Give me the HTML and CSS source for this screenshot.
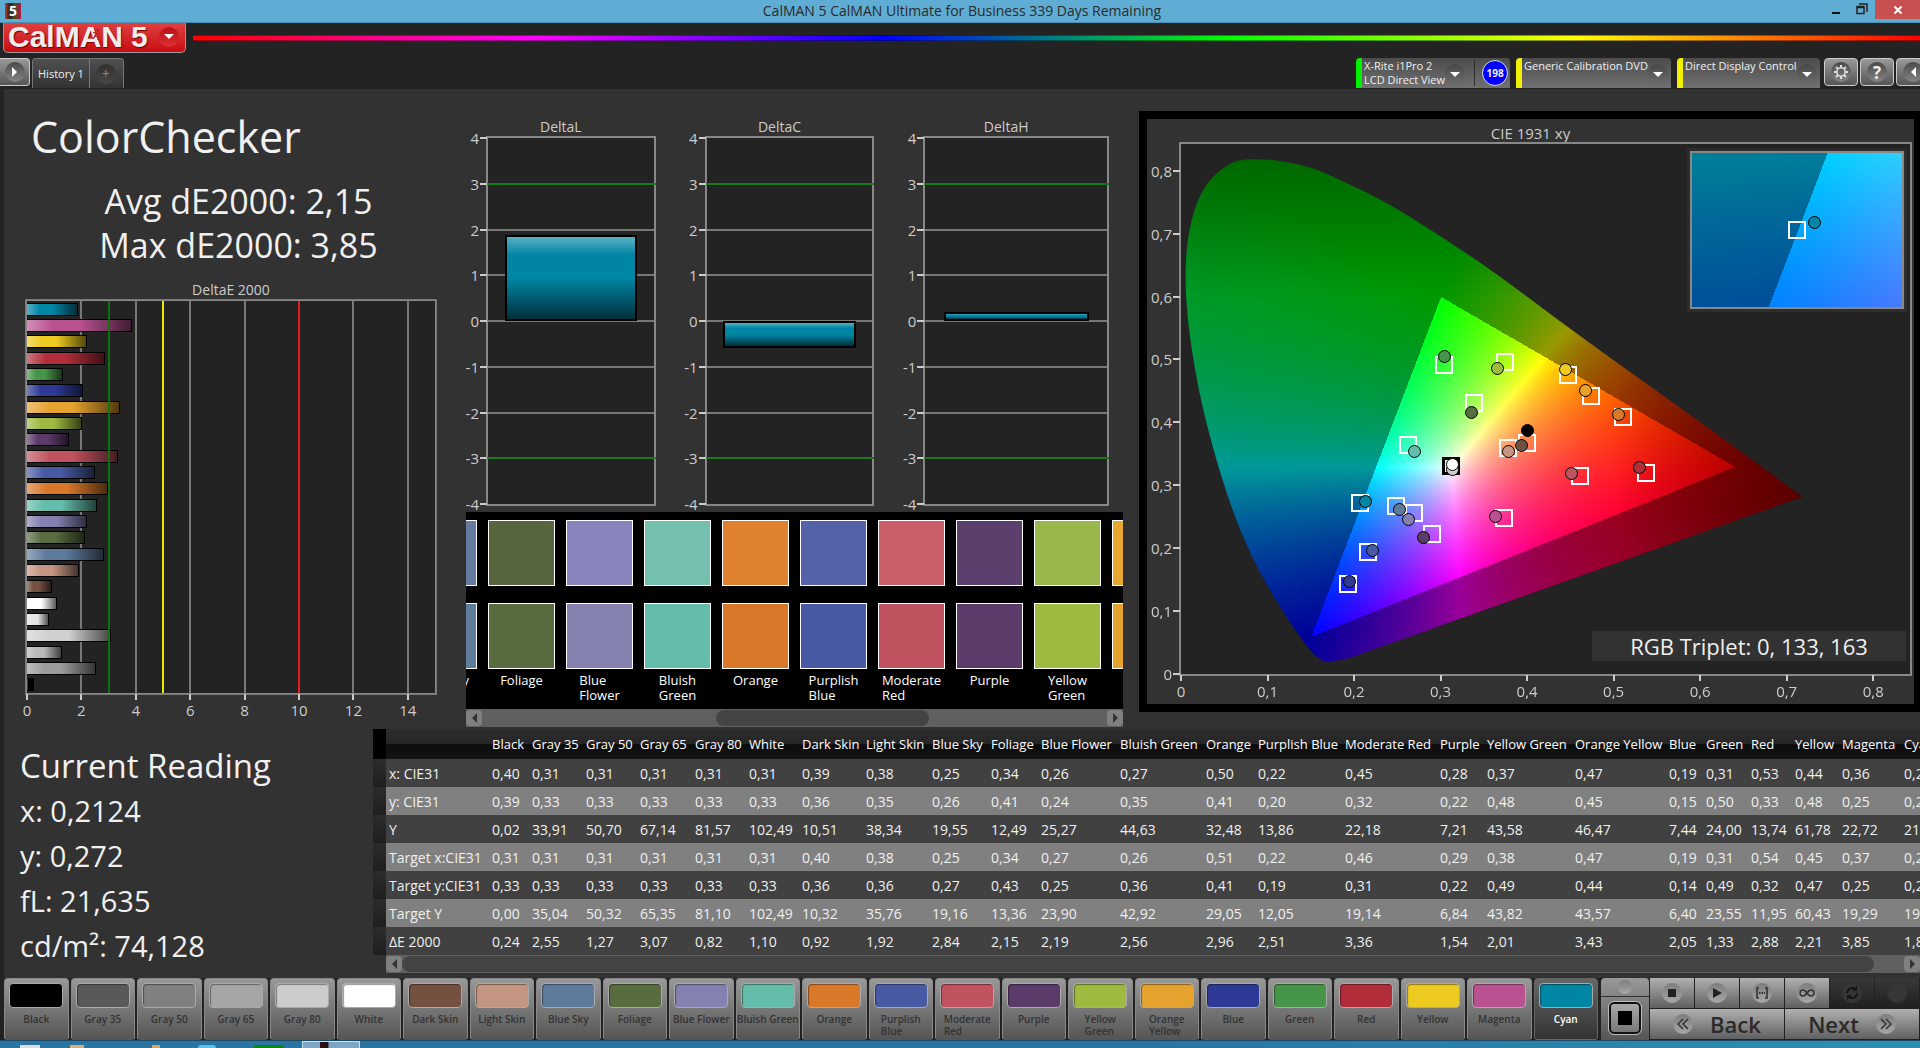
FILE: index.html
```html
<!DOCTYPE html>
<html lang="en">
<head>
    <meta charset="UTF-8">
    <meta name="viewport" content="width=device-width, initial-scale=1.0">
    <title>CalMAN 5</title>
    <link rel="stylesheet" href="styles.css">
</head>
<body>
    <header class="titlebar">
        <span class="app-icon">5</span>
        <h1>CalMAN 5 CalMAN Ultimate for Business 339 Days Remaining</h1>
        <div class="window-buttons">
            <button aria-label="Minimize"><svg width="10" height="12" viewBox="0 0 10 12"><path d="M1 10h8" stroke="#111" stroke-width="2"/></svg></button>
            <button aria-label="Restore"><svg width="12" height="12" viewBox="0 0 12 12"><path d="M1 3.500h7v7H1zM1 4.500h7M3 1h8v8" fill="none" stroke="#222" stroke-width="1.500"/></svg></button>
            <button class="close" aria-label="Close"><svg width="10" height="10" viewBox="0 0 10 10"><path d="M1.500 1.500l7 7M8.500 1.500l-7 7" stroke="#fff" stroke-width="2"/></svg></button>
        </div>
    </header>

    <div class="brand-row">
        <button class="logo">
            <span class="logo-text">CalMAN<b>5</b></span>
            <svg class="runner" width="9" height="12" viewBox="0 0 9 12"><circle cx="6" cy="1.500" r="1.400" fill="#b22"/><path d="M1 4l3-1 2 2 2-1M4 3L3 7l3 1v3M3 7L1 10" fill="none" stroke="#b22" stroke-width="1.300"/></svg>
            <span class="round red"><i class="tri down"></i></span>
        </button>
        <div class="rainbow"></div>
    </div>

    <div class="tab-row">
        <button class="panel-btn panel-left" aria-label="Show panel"><span class="round"><i class="tri right"></i></span></button>
        <div class="tabs">
            <button class="tab">History 1</button>
            <button class="tab add" aria-label="Add tab"><span class="round dark">+</span></button>
        </div>
        <div class="devices">
            <button class="device meter">
                <span class="device-name">X-Rite i1Pro 2<br>LCD Direct View</span>
                <span class="round drop"><i class="tri down"></i></span>
                <span class="reads"><span class="badge">198</span></span>
            </button>
            <button class="device source">
                <span class="device-name">Generic Calibration DVD</span>
                <span class="round drop"><i class="tri down"></i></span>
            </button>
            <button class="device display">
                <span class="device-name">Direct Display Control</span>
                <span class="round drop"><i class="tri down"></i></span>
            </button>
            <div class="tools">
                <button class="panel-btn" aria-label="Settings"><span class="round"><svg width="16" height="16" viewBox="0 0 16 16"><circle cx="8" cy="8" r="4.200" fill="none" stroke="#ddd" stroke-width="1.600"/><path d="M8 1v2.500M8 12.500V15M1 8h2.500M12.500 8H15M3 3l1.800 1.800M11.200 11.200L13 13M13 3l-1.800 1.800M4.800 11.200L3 13" stroke="#ddd" stroke-width="2"/></svg></span></button>
                <button class="panel-btn" aria-label="Help"><span class="round help">?</span></button>
                <button class="panel-btn" aria-label="Collapse"><span class="round"><i class="tri left"></i></span></button>
            </div>
        </div>
    </div>

    <main class="workspace">
        <div class="upper">
            <section class="summary">
                <h2>ColorChecker</h2>
                <p class="average">Avg dE2000: 2,15<br>Max dE2000: 3,85</p>
                <h3>DeltaE 2000</h3>
                <div class="de-plot" id="de-plot"></div>
            </section>

            <section class="middle">
                <div class="deltas" id="deltas"></div>
                <div class="strip" id="strip"></div>
                <div class="scrollbar">
                    <button aria-label="Scroll left"><i class="tri left"></i></button>
                    <div class="track"><span class="thumb short"></span></div>
                    <button aria-label="Scroll right"><i class="tri right"></i></button>
                </div>
            </section>

            <section class="cie">
                <h3>CIE 1931 xy</h3>
                <div class="cie-plot" id="cie-plot">
                    <canvas id="cie-canvas"></canvas>
                    <div class="inset" id="inset"><canvas id="inset-canvas"></canvas></div>
                    <div class="triplet">RGB Triplet: 0, 133, 163</div>
                </div>
            </section>
        </div>

        <div class="lower">
            <section class="reading">
                <h2>Current Reading</h2>
                <p>x: 0,2124</p>
                <p>y: 0,272</p>
                <p>fL: 21,635</p>
                <p>cd/m²: 74,128</p>
            </section>
            <section class="data">
                <div class="table-wrap">
                    <table id="table"></table>
                </div>
                <div class="scrollbar">
                    <button aria-label="Scroll left"><i class="tri left"></i></button>
                    <div class="track"><span class="thumb long"></span></div>
                    <button aria-label="Scroll right"><i class="tri right"></i></button>
                </div>
            </section>
        </div>
    </main>

    <footer class="patterns">
        <div class="patches" id="patches"></div>
        <div class="window-size">
            <button class="up" aria-label="Larger window"><span class="round pale"><i class="tri up"></i></span></button>
            <button class="size" aria-label="Window size"><span></span></button>
        </div>
        <div class="transport">
            <button aria-label="Stop"><span class="round pale"><svg width="10" height="10"><path d="M1 1h8v8H1z" fill="#222"/></svg></span></button>
            <button aria-label="Play"><span class="round pale"><svg width="10" height="10"><path d="M1 0l9 5-9 5z" fill="#222"/></svg></span></button>
            <button aria-label="Read series"><span class="round pale"><svg width="14" height="12" viewBox="0 0 14 12"><path d="M4 1H2v10h2M10 1h2v10h-2" fill="none" stroke="#333" stroke-width="1.600"/><path d="M4 6h6" stroke="#333" stroke-width="2" stroke-dasharray="1.500 1"/></svg></span></button>
            <button aria-label="Read continuously"><span class="round pale"><svg width="16" height="8" viewBox="0 0 16 8"><path d="M8 4C6.500 1.500 5.500 1 4 1a3 3 0 000 6c1.500 0 2.500-.5 4-3s2.500-3 4-3a3 3 0 010 6c-1.500 0-2.500-.5-4-3z" fill="none" stroke="#333" stroke-width="1.500"/></svg></span></button>
            <button class="off" aria-label="Refresh"><span class="round"><svg width="14" height="14" viewBox="0 0 14 14"><path d="M2 7a5 5 0 018-4M12 7a5 5 0 01-8 4" fill="none" stroke="#161616" stroke-width="2"/><path d="M12 0v5H7zM2 14V9h5z" fill="#161616"/></svg></span></button>
            <button class="off" aria-label="Unavailable"><span class="round"></span></button>
            <button class="nav"><span class="round pale"><svg width="12" height="12" viewBox="0 0 12 12"><path d="M6 1L1 6l5 5M11 1L6 6l5 5" fill="none" stroke="#333" stroke-width="1.500"/></svg></span>Back</button>
            <button class="nav">Next<span class="round pale"><svg width="12" height="12" viewBox="0 0 12 12"><path d="M1 1l5 5-5 5M6 1l5 5-5 5" fill="none" stroke="#333" stroke-width="1.500"/></svg></span></button>
        </div>
    </footer>
    <div class="taskbar"><i></i><i></i><i></i><i></i><i></i><i></i></div>

    <script src="script.js"></script>
</body>
</html>
```
FILE: styles.css
```css
* {
    box-sizing: border-box;
}

body {
    margin: 0;
    height: 100vh;
    display: flex;
    flex-direction: column;
    overflow: hidden;
    background-color: #232323;
    color: #f0f0f0;
    font-family: "Open Sans", "Noto Sans", sans-serif;
    font-size: 14px;
}

h1, h2, h3, p {
    margin: 0;
    font-weight: normal;
}

button {
    font: inherit;
    color: inherit;
    border: none;
    padding: 0;
    cursor: pointer;
}

/* small shared shapes */
.round {
    display: flex;
    justify-content: center;
    align-items: center;
    flex: none;
    width: 20px;
    height: 20px;
    border-radius: 50%;
    background: linear-gradient(#4a4a4a, #858585);
}

.round.red { background: linear-gradient(#b80f1a, #e03030); }
.round.dark { background: linear-gradient(#303030, #484848); color: #888; }
.round.pale { background: linear-gradient(#7c7c7c, #a8a8a8); }
.round.drop { background: linear-gradient(#474747, #6c6c6c); }
.round.help { font-size: 17px; font-weight: bold; }

.tri {
    width: 0;
    height: 0;
    border: 5px solid transparent;
}

.tri.down { border-top-color: #fff; border-bottom: none; }
.tri.up { border-bottom-color: #222; border-top: none; }
.tri.right { border-left-color: #fff; border-right: none; }
.tri.left { border-right-color: #fff; border-left: none; }

/* title bar */
.titlebar {
    display: flex;
    align-items: center;
    height: 23px;
    flex: none;
    padding-left: 5px;
    background-color: #5fadd5;
    border-bottom: 1px solid #4690b5;
}

.app-icon {
    width: 16px;
    height: 16px;
    background: linear-gradient(90deg, #c43a20, #222 30%, #4a4a20 60%, #b01848);
    color: #fff;
    font: bold 14px/16px "Open Sans", sans-serif;
    text-align: center;
}

.titlebar h1 {
    flex: 1;
    padding-left: 80px;
    text-align: center;
    font-size: 14px;
    line-height: 22px;
    color: #2a2a2a;
}

.window-buttons {
    display: flex;
    align-self: flex-start;
}

.window-buttons button {
    width: 26px;
    height: 19px;
    background: none;
}

.window-buttons .close {
    width: 45px;
    background-color: #c75050;
}

/* logo and rainbow */
.brand-row {
    display: flex;
    align-items: flex-start;
    height: 35px;
    flex: none;
    padding-left: 3px;
}

.logo {
    position: relative;
    display: flex;
    align-items: center;
    justify-content: space-between;
    width: 183px;
    height: 30px;
    padding: 0 6px 2px 4px;
    border: 1px solid #999;
    border-top: none;
    border-radius: 0 0 5px 5px;
    background: linear-gradient(#e04040, #c80d12);
}

.logo-text {
    font: bold 30px/27px "Liberation Sans", sans-serif;
    color: #eee;
    text-shadow: 1px 1px 1px #700;
}

.logo-text b {
    margin-left: 8px;
}

.runner {
    position: absolute;
    left: 88px;
    top: 6px;
}

.rainbow {
    flex: 1;
    height: 6px;
    margin: 12px 0 0 7px;
    background: linear-gradient(90deg, #f00, #f0f 20%, #00f 40%, #0f0 60%, #ff0 80%, #f00);
    border-top: 1px solid rgba(0, 0, 0, 0.4);
    border-bottom: 1px solid rgba(0, 0, 0, 0.4);
}

/* tabs and devices */
.tab-row {
    display: flex;
    height: 31px;
    flex: none;
}

.panel-btn {
    display: flex;
    justify-content: center;
    align-items: center;
    width: 34px;
    height: 28px;
    border: 1px solid #ccc;
    border-radius: 4px;
    background: linear-gradient(#999, #555);
}

.panel-left {
    width: 30px;
    border-left: none;
    border-radius: 0 4px 4px 0;
}

.tabs {
    display: flex;
    margin-left: 2px;
    height: 30px;
    border: 1px solid #777;
    border-bottom: none;
    border-radius: 4px 4px 0 0;
    background: linear-gradient(#505050, #333);
}

.tab {
    display: flex;
    align-items: center;
    padding: 0 5px;
    font-size: 11px;
    background: none;
}

.tab.add {
    padding: 0 7px 0 6px;
    border-left: 1px solid #777;
    font-size: 14px;
}

.devices {
    display: flex;
    gap: 6px;
    margin-left: auto;
    margin-right: -10px;
}

.device {
    display: flex;
    align-items: flex-start;
    height: 30px;
    border-left: 6px solid #f0f000;
    border-radius: 4px 4px 0 0;
    background: linear-gradient(#4c4c4c, #707070);
    text-align: left;
    font-size: 11px;
    line-height: 14px;
    white-space: nowrap;
}

.device.meter { width: 154px; border-left-color: #0e0; }
.device.source { width: 155px; }
.device.display { width: 143px; }

.device-name {
    flex: 1;
    padding: 1px 0 0 2px;
}

.device .round {
    margin: 6px 9px 0 0;
}

.reads {
    height: 26px;
    margin: 2px 2px 2px 0;
    padding-left: 7px;
    border-left: 1px solid #2c2c2c;
}

.badge {
    display: block;
    width: 26px;
    height: 26px;
    border: 1px solid #ddd;
    border-radius: 50%;
    background-color: #00f;
    font-size: 10px;
    font-weight: bold;
    line-height: 24px;
    text-align: center;
}

.tools {
    display: flex;
    gap: 2px;
    margin-left: -2px;
}

/* workspace */
.workspace {
    flex: 1;
    display: flex;
    flex-direction: column;
    min-height: 0;
    margin-left: 3px;
    border-left: 1px solid #222;
    background-color: #323232;
}

.upper {
    flex: 1;
    display: grid;
    grid-template-columns: minmax(0, 445fr) minmax(0, 674fr) minmax(0, 797fr);
    min-height: 0;
}

.upper h3 {
    font-size: 14px;
    line-height: 20px;
    text-align: center;
    color: #ccc;
}

.summary {
    display: flex;
    flex-direction: column;
    padding: 18px 13px 35px 22px;
}

.summary h2 {
    padding-left: 5px;
    font-size: 43px;
    line-height: 60px;
}

.average {
    padding: 12px 0 13px 15px;
    text-align: center;
    font-size: 34px;
    line-height: 44px;
}

.de-plot {
    flex: 1;
    position: relative;
    display: flex;
    flex-direction: column;
    border: 1px solid #888;
    outline: 1px solid #777;
    background-color: #232323;
    color: #ccc;
}

.de-row {
    flex: 1;
    display: flex;
    align-items: center;
}

.bar {
    border: 1px solid #000;
    background-image: linear-gradient(90deg, rgba(255, 255, 255, 0.35), transparent 25%, transparent 50%, rgba(0, 0, 0, 0.65));
}

.de-row .bar {
    position: relative;
    height: 13px;
    border-left: none;
}

.grid-x, .limit-x {
    position: absolute;
    top: 0;
    bottom: 0;
    width: 2px;
    margin-left: -1px;
    background-color: #777;
}

.limit-x {
    opacity: 0.9;
}

.tick-x {
    position: absolute;
    top: 100%;
    width: 40px;
    margin-left: -20px;
    padding-top: 7px;
    text-align: center;
    font-size: 15px;
    line-height: 20px;
}

.tick-x::before, .tick-y::after {
    content: "";
    position: absolute;
    background-color: #ccc;
}

.tick-x::before {
    left: 19px;
    top: 1px;
    width: 2px;
    height: 6px;
}

/* delta charts */
.middle {
    display: flex;
    flex-direction: column;
    padding: 28px 0 0 17px;
}

.deltas {
    flex: 1;
    display: grid;
    grid-template-columns: minmax(0, 190fr) minmax(0, 190fr) minmax(0, 206fr);
    gap: 29px;
    padding-right: 14px;
}

.delta {
    display: flex;
    flex-direction: column;
    padding-bottom: 7px;
}

.delta-plot {
    flex: 1;
    position: relative;
    margin: 0 1px 0 21px;
    border: 1px solid #888;
    outline: 1px solid #888;
    background-color: #232323;
    color: #ccc;
}

.grid-y, .limit-y {
    position: absolute;
    left: 0;
    right: 0;
    height: 2px;
    margin-top: -1px;
    background-color: #777;
}

.limit-y {
    left: -2px;
    right: -2px;
    background-color: #1a7a1a;
}

.tick-y {
    position: absolute;
    right: 100%;
    width: 40px;
    margin-top: -10px;
    padding-right: 9px;
    text-align: right;
    font-size: 15px;
    line-height: 20px;
}

.tick-y::after {
    right: 1px;
    top: 9px;
    width: 7px;
    height: 2px;
}

.delta .bar {
    position: absolute;
    left: 10%;
    right: 10%;
    border-width: 2px;
    background-image: linear-gradient(rgba(255, 255, 255, 0.35), transparent 22%, transparent 50%, rgba(0, 0, 0, 0.65));
}

/* swatch strip */
.strip {
    position: relative;
    display: flex;
    justify-content: center;
    gap: 11px;
    padding: 8px 0 5px;
    overflow: hidden;
    background-color: #000;
}

.swatch {
    flex: none;
    display: flex;
    flex-direction: column;
    align-items: center;
    width: 67px;
    font-size: 13px;
    line-height: 15px;
}

.swatch span {
    width: 67px;
    height: 66px;
    border: 1px solid #fff;
    margin-bottom: 17px;
}

.swatch span + span {
    margin-bottom: 4px;
}

.swatch b {
    font-weight: normal;
    height: 31px;
    color: #fff;
}

.scrollbar {
    display: flex;
    align-items: center;
    height: 18px;
    flex: none;
    background-color: #606060;
}

.middle .scrollbar {
    margin-bottom: 2px;
}

.scrollbar button {
    display: flex;
    justify-content: center;
    align-items: center;
    width: 16px;
    height: 16px;
    border-radius: 4px;
    background-color: #808080;
}

.scrollbar .tri.left { border-right-color: #333; }
.scrollbar .tri.right { border-left-color: #333; }

.track {
    flex: 1;
    display: flex;
    height: 16px;
}

.thumb {
    border-radius: 8px;
    background-color: #444;
}

.thumb.short { width: 34%; margin-left: 37.5%; }
.thumb.long { width: 98%; }

/* chromaticity chart */
.cie {
    display: flex;
    flex-direction: column;
    margin: 22px 0 17px 16px;
    padding: 4px 4px 30px 34px;
    border: 8px solid #000;
    border-right-width: 6px;
}

.cie h3 {
    padding: 0 30px 1px 0;
    font-size: 15px;
}

.cie-plot {
    flex: 1;
    position: relative;
    min-height: 0;
    outline: 2px solid #888;
    background-color: #232323;
    color: #ccc;
}

.cie-plot > canvas {
    position: absolute;
    width: 100%;
    height: 100%;
}

.target, .measured {
    position: absolute;
    width: 18px;
    height: 18px;
    margin: -9px 0 0 -9px;
    border: 2px solid #fff;
}

.target.reference {
    border: 3px solid #000;
}

.measured {
    width: 13px;
    height: 13px;
    margin: -6px 0 0 -6px;
    border: 1px solid #000;
    border-radius: 50%;
}

.inset {
    position: absolute;
    top: 7px;
    right: 6px;
    width: 214px;
    height: 158px;
    border: 2px solid #888;
    outline: 3px solid #2d2d2d;
}

.inset canvas {
    display: block;
    width: 100%;
    height: 100%;
}

.triplet {
    position: absolute;
    right: 4px;
    bottom: 13px;
    width: 314px;
    background-color: #323232;
    text-align: center;
    font-size: 22px;
    line-height: 30px;
    color: #f0f0f0;
}

/* readings and table */
.lower {
    display: flex;
    flex: none;
    height: 249px;
}

.reading {
    flex: none;
    width: 369px;
    padding: 14px 0 0 16px;
    font-size: 29px;
    line-height: 45px;
}

.reading h2 {
    font-size: 33px;
}

.data {
    flex: 1;
    min-width: 0;
}

.data .scrollbar {
    margin-left: 13px;
}

.table-wrap {
    overflow: hidden;
}

table {
    table-layout: fixed;
    width: 1588px;
    border-collapse: collapse;
    font-size: 14px;
}

th, td {
    height: 28px;
    padding: 0 0 0 3px;
    text-align: left;
    font-weight: normal;
    white-space: nowrap;
}

thead th {
    height: 30px;
    font-size: 13px;
    color: #fff;
}

thead tr {
    background: linear-gradient(#2c2c2c, #262626 50%, #0c0c0c 52%, #141414);
}

thead .gutter {
    background-color: #000;
}

tbody tr {
    background-color: #414141;
}

tbody tr:nth-child(even) {
    background-color: #808080;
}

tbody .gutter {
    background: linear-gradient(#2c2c2c, #1e1e1e);
}

/* pattern bar */
.patterns {
    flex: none;
    display: flex;
    height: 62px;
    padding-left: 4px;
    background-color: #222;
}

.patches {
    flex: 1;
    display: flex;
    gap: 2px;
    min-width: 0;
    padding-right: 3px;
}

.patch {
    flex: 1;
    min-width: 0;
    display: flex;
    flex-direction: column;
    align-items: center;
    border: 1px solid #888;
    border-bottom-color: #555;
    border-radius: 4px 4px 3px 3px;
    background: linear-gradient(#999, #555);
    color: #333;
    font-size: 10px;
    font-weight: 600;
    line-height: 12px;
    text-align: left;
}

.patch.selected {
    border-color: #666;
    background: linear-gradient(#666, #333);
    color: #fff;
}

.patch span {
    width: 86%;
    height: 25px;
    margin: 4px 0 5px;
    border: 1px solid #aaa;
    border-radius: 4px;
    box-shadow: inset 1px 1px 1px rgba(0, 0, 0, 0.4);
}

.patch b {
    font-weight: inherit;
    white-space: nowrap;
}

.window-size {
    display: flex;
    flex-direction: column;
    width: 48px;
    border-radius: 4px 4px 0 0;
    background: linear-gradient(#999, #555);
}

.window-size button {
    display: flex;
    justify-content: center;
    align-items: center;
    background: none;
}

.window-size .up {
    height: 19px;
    border-bottom: 1px solid #333;
}

.window-size .up .round {
    width: 14px;
    height: 14px;
}

.window-size .size {
    width: 32px;
    height: 32px;
    margin: 5px auto;
    border: 2px solid #111;
    border-radius: 5px;
    outline: 1px solid #bbb;
    background: linear-gradient(#aaa, #777);
}

.window-size .size span {
    width: 14px;
    height: 14px;
    background-color: #000;
}

.transport {
    display: grid;
    grid-template-columns: repeat(6, 44px);
    grid-template-rows: 30px 30px;
    gap: 1px;
    padding-left: 1px;
    width: 271px;
}

.transport button {
    display: flex;
    justify-content: center;
    align-items: center;
    background: linear-gradient(#b0b0b0, #606060);
}

.transport .off {
    background: linear-gradient(#383838, #202020);
}

.transport .off .round {
    background: #363636;
}

.transport .nav {
    grid-column: span 3;
    gap: 17px;
    color: #2a2a2a;
    font-size: 22px;
    font-weight: 600;
}

.taskbar {
    display: flex;
    gap: 22px;
    height: 8px;
    flex: none;
    padding: 4px 0 0 20px;
    border-top: 1px solid #1c4a66;
    background: linear-gradient(90deg, #2a74a2 60%, #2e8fb0);
}

.taskbar i { width: 20px; background-color: #ddd; }
.taskbar i:nth-child(2) { width: 14px; margin-left: 8px; background-color: #d8b080; }
.taskbar i:nth-child(3) { width: 8px; margin-left: 46px; background-color: #e0a060; }
.taskbar i:nth-child(4) { width: 18px; margin-left: 16px; border-radius: 9px 9px 0 0; background-color: #5cc0ea; }
.taskbar i:nth-child(5) { width: 30px; margin-left: 16px; background-color: #0a8a0a; }
.taskbar i:nth-child(6) { width: 58px; margin: -4px 0 0 -4px; border: 1px solid #cde; border-bottom: none; background: linear-gradient(90deg, #7ea6c4 30%, #301018 31%, #201018 45%, #7ea6c4 46%); }
```
FILE: script.js
```js
// name, measured colour, target colour, column width, then x, y, Y, target x, target y, target Y, dE
const patches = [
    ['Black', '#000000', '#000000', 40, '0,40', '0,39', '0,02', '0,31', '0,33', '0,00', '0,24'],
    ['Gray 35', '#595959', '#595959', 54, '0,31', '0,33', '33,91', '0,31', '0,33', '35,04', '2,55'],
    ['Gray 50', '#808080', '#808080', 54, '0,31', '0,33', '50,70', '0,31', '0,33', '50,32', '1,27'],
    ['Gray 65', '#a6a6a6', '#a6a6a6', 55, '0,31', '0,33', '67,14', '0,31', '0,33', '65,35', '3,07'],
    ['Gray 80', '#cccccc', '#cccccc', 54, '0,31', '0,33', '81,57', '0,31', '0,33', '81,10', '0,82'],
    ['White', '#ffffff', '#ffffff', 53, '0,31', '0,33', '102,49', '0,31', '0,33', '102,49', '1,10'],
    ['Dark Skin', '#735040', '#735040', 64, '0,39', '0,36', '10,51', '0,40', '0,36', '10,32', '0,92'],
    ['Light Skin', '#c49682', '#c49682', 66, '0,38', '0,35', '38,34', '0,38', '0,36', '35,76', '1,92'],
    ['Blue Sky', '#5e7b9c', '#667ba2', 59, '0,25', '0,26', '19,55', '0,25', '0,27', '19,16', '2,84'],
    ['Foliage', '#586c40', '#586640', 50, '0,34', '0,41', '12,49', '0,34', '0,43', '13,36', '2,15'],
    ['Blue Flower', '#8480b0', '#8883ba', 79, '0,26', '0,24', '25,27', '0,27', '0,25', '23,90', '2,19'],
    ['Bluish Green', '#64bdaa', '#74bfae', 86, '0,27', '0,35', '44,63', '0,26', '0,36', '42,92', '2,56'],
    ['Orange', '#d97828', '#e0812f', 52, '0,50', '0,41', '32,48', '0,51', '0,41', '29,05', '2,96'],
    ['Purplish Blue', '#485aa4', '#5462aa', 87, '0,22', '0,20', '13,86', '0,22', '0,19', '12,05', '2,51'],
    ['Moderate Red', '#c1525f', '#ca5f6a', 95, '0,45', '0,32', '22,18', '0,46', '0,31', '19,14', '3,36'],
    ['Purple', '#5b3b6a', '#5b406e', 47, '0,28', '0,22', '7,21', '0,29', '0,22', '6,84', '1,54'],
    ['Yellow Green', '#9ebb40', '#98b84e', 88, '0,37', '0,48', '43,58', '0,38', '0,49', '43,82', '2,01'],
    ['Orange Yellow', '#e6a22e', '#e6a82e', 94, '0,47', '0,45', '46,47', '0,47', '0,44', '43,57', '3,43'],
    ['Blue', '#2e3996', '#2e3996', 37, '0,19', '0,15', '7,44', '0,19', '0,14', '6,40', '2,05'],
    ['Green', '#479548', '#479548', 45, '0,31', '0,50', '24,00', '0,31', '0,49', '23,55', '1,33'],
    ['Red', '#b12d39', '#b12d39', 44, '0,53', '0,33', '13,74', '0,54', '0,32', '11,95', '2,88'],
    ['Yellow', '#edca20', '#edca20', 47, '0,44', '0,48', '61,78', '0,45', '0,47', '60,43', '2,21'],
    ['Magenta', '#ba5292', '#ba5292', 62, '0,36', '0,25', '22,72', '0,37', '0,25', '19,29', '3,85'],
    ['Cyan', '#0086a5', '#0086a5', 60, '0,21', '0,27', '21,64', '0,21', '0,27', '19,64', '1,87']
];
const labels = ['x: CIE31', 'y: CIE31', 'Y', 'Target x:CIE31', 'Target y:CIE31', 'Target Y', 'ΔE 2000'];
const num = s => parseFloat(s.replace(',', '.'));

function add(parent, className, styles, text) {
    const el = document.createElement('div');
    el.className = className;
    Object.assign(el.style, styles);
    if (text) el.textContent = text;
    parent.appendChild(el);
    return el;
}

// DeltaE bars, last patch first; grays are lifted so they read on the dark plot
const barColors = { 'Gray 35': '#9c9c9c', 'Gray 50': '#b9b9b9', 'Gray 65': '#d0d0d0', 'Gray 80': '#e6e6e6' };
const dePlot = document.getElementById('de-plot');
for (let v = 0; v <= 14; v += 2) {
    const left = v / 15 * 100 + '%';
    if (v) add(dePlot, 'grid-x', { left });
    add(dePlot, 'tick-x', { left }, String(v));
}
[...patches].reverse().forEach(p => {
    const row = add(dePlot, 'de-row', {});
    add(row, 'bar', { width: num(p[10]) / 15 * 100 + '%', backgroundColor: barColors[p[0]] || p[1] });
});
[[3, '#0a7a0a'], [5, '#ffff00'], [10, '#f01414']].forEach(([v, c]) => {
    add(dePlot, 'limit-x', { left: v / 15 * 100 + '%', backgroundColor: c });
});

// DeltaL / DeltaC / DeltaH
[['DeltaL', 1.87], ['DeltaC', -0.6], ['DeltaH', 0.2]].forEach(([name, value]) => {
    const chart = add(document.getElementById('deltas'), 'delta', {});
    chart.innerHTML = '<h3>' + name + '</h3>';
    const plot = add(chart, 'delta-plot', {});
    for (let v = 4; v >= -4; v--) {
        const top = (4 - v) / 8 * 100 + '%';
        if (Math.abs(v) < 4) add(plot, 'grid-y', { top });
        if (Math.abs(v) === 3) add(plot, 'limit-y', { top });
        add(plot, 'tick-y', { top }, String(v));
    }
    add(plot, 'bar', {
        top: (4 - Math.max(value, 0)) / 8 * 100 + '%',
        height: Math.abs(value) / 8 * 100 + '%',
        backgroundColor: '#0086a5'
    });
});

// target over measured swatches
const twoLines = name => name.replace(' ', '<br>');
document.getElementById('strip').innerHTML = patches.slice(8, 18).map(p => `
    <div class="swatch">
        <span style="background-color: ${p[2]}"></span>
        <span style="background-color: ${p[1]}"></span>
        <b>${p[0] === 'Blue Sky' ? p[0] : twoLines(p[0])}</b>
    </div>`).join('');

// table
document.getElementById('table').innerHTML =
    '<colgroup><col style="width: 13px"><col style="width: 103px">' +
    patches.map(p => `<col style="width: ${p[3]}px">`).join('') + '</colgroup>' +
    '<thead><tr><th class="gutter"></th><th></th>' + patches.map(p => `<th>${p[0]}</th>`).join('') + '</tr></thead>' +
    '<tbody>' + labels.map((label, i) =>
        `<tr><td class="gutter"></td><th>${label}</th>` + patches.map(p => `<td>${p[4 + i]}</td>`).join('') + '</tr>'
    ).join('') + '</tbody>';

// pattern buttons
const wrapped = ['Purplish Blue', 'Moderate Red', 'Yellow Green', 'Orange Yellow'];
document.getElementById('patches').innerHTML = patches.map(p => `
    <button class="patch${p[0] === 'Cyan' ? ' selected' : ''}">
        <span style="background-color: ${p[1]}"></span>
        <b>${wrapped.includes(p[0]) ? twoLines(p[0]) : p[0]}</b>
    </button>`).join('');

// chromaticity chart
const MAX = 0.8425;
const locus = [
    [0.7185, 0.2819], [0.1974, 0.0266], [0.173, 0.0175], [0.1596, 0.0229], [0.145, 0.0441], [0.116, 0.1025],
    [0.0812, 0.1848], [0.0522, 0.2856], [0.0246, 0.42], [0.009, 0.54], [0.004, 0.636], [0.009, 0.71],
    [0.0232, 0.7686], [0.0435, 0.8005], [0.0638, 0.8164], [0.084, 0.819], [0.1131, 0.8164], [0.1509, 0.8058],
    [0.1857, 0.7846], [0.2408, 0.7474], [0.3018, 0.6943], [0.3627, 0.6386], [0.4469, 0.551], [0.5978, 0.4024]
];

function chroma(x, y) {
    const z = 1 - x - y;
    const rgb = [
        3.2406 * x - 1.5372 * y - 0.4986 * z,
        -0.9689 * x + 1.8758 * y + 0.0415 * z,
        0.0557 * x - 0.204 * y + 1.057 * z
    ];
    const inside = Math.min(...rgb) >= 0;
    let k = 255 / Math.max(...rgb);
    if (!inside) k *= 0.6;
    if (x > 0.5) k *= 1 - (x - 0.5) * 2;
    if (y > 0.6) k *= 1 - (y - 0.6) * 1.5;
    return rgb.map(c => Math.max(c, 0) * k);
}

function paint(canvas, x0, x1, y0, y1) {
    const w = canvas.width = canvas.clientWidth;
    const h = canvas.height = canvas.clientHeight;
    const ctx = canvas.getContext('2d');
    const img = ctx.createImageData(w, h);
    for (let j = 0, n = 0; j < h; j++) {
        for (let i = 0; i < w; i++, n += 4) {
            img.data.set([...chroma(x0 + (x1 - x0) * i / w, y1 - (y1 - y0) * j / h), 255], n);
        }
    }
    ctx.putImageData(img, 0, 0);
    return ctx;
}

const ciePlot = document.getElementById('cie-plot');
const cie = document.getElementById('cie-canvas');
const ctx = paint(cie, 0, MAX, 0, MAX);
const pts = locus.map(([x, y]) => [x / MAX * cie.width, (1 - y / MAX) * cie.height]);
ctx.globalCompositeOperation = 'destination-in';
ctx.beginPath();
ctx.moveTo(...pts[0]);
ctx.lineTo(...pts[1]);
for (let i = 2; i < pts.length - 1; i++) {
    const next = pts[i + 1];
    ctx.quadraticCurveTo(...pts[i], (pts[i][0] + next[0]) / 2, (pts[i][1] + next[1]) / 2);
}
ctx.lineTo(...pts[pts.length - 1]);
ctx.closePath();
ctx.fill();

for (let v = 0; v <= 8; v++) {
    const text = v ? '0,' + v : '0';
    const at = v / 10 / MAX * 100;
    add(ciePlot, 'tick-x', { left: at + '%' }, text);
    add(ciePlot, 'tick-y', { top: 100 - at + '%' }, text);
}

// target x, y and measured x, y
const marks = [
    ['Green', 0.304, 0.4916, 0.304, 0.506], ['Yellow Green', 0.3743, 0.4963, 0.3656, 0.4868],
    ['Yellow', 0.4469, 0.4751, 0.4434, 0.4847], ['Orange Yellow', 0.4736, 0.4422, 0.4666, 0.4518],
    ['Foliage', 0.3389, 0.4305, 0.3355, 0.4162], ['Orange', 0.5113, 0.4088, 0.5049, 0.4135],
    ['Dark Skin', 0.3999, 0.3668, 0.3929, 0.3647], ['Light Skin', 0.3784, 0.3599, 0.3784, 0.3546],
    ['Bluish Green', 0.2629, 0.3642, 0.2687, 0.3546], ['Black', 0.3116, 0.3307, 0.3999, 0.3881],
    ['Gray 80', 0.3116, 0.3307, 0.3134, 0.3254], ['White', 0.3116, 0.3307, 0.3134, 0.3339],
    ['Red', 0.5369, 0.3196, 0.5298, 0.3297], ['Moderate Red', 0.4614, 0.3148, 0.4504, 0.3196],
    ['Cyan', 0.207, 0.2718, 0.2124, 0.2755], ['Blue Sky', 0.249, 0.267, 0.2524, 0.2623],
    ['Blue Flower', 0.2692, 0.2559, 0.2629, 0.2463], ['Purple', 0.2902, 0.2225, 0.2797, 0.2177],
    ['Magenta', 0.3732, 0.2479, 0.3627, 0.2511], ['Purplish Blue', 0.2165, 0.1938, 0.2211, 0.197],
    ['Blue', 0.1926, 0.1428, 0.1944, 0.1477]
];
const place = (x, y) => ({ left: x / MAX * 100 + '%', top: 100 - y / MAX * 100 + '%' });
marks.forEach(([name, tx, ty]) => {
    add(ciePlot, /Black|Gray|White/.test(name) ? 'target reference' : 'target', place(tx, ty));
});
marks.forEach(([name, , , x, y]) => {
    const color = patches.find(p => p[0] === name)[1];
    add(ciePlot, 'measured', { ...place(x, y), backgroundColor: color });
});

// magnified view around the selected patch
const ZOOM = 4;
const insetBox = document.getElementById('inset');
const insetCanvas = document.getElementById('inset-canvas');
const halfX = insetCanvas.clientWidth / cie.width * MAX / ZOOM / 2;
const halfY = insetCanvas.clientHeight / cie.height * MAX / ZOOM / 2;
const [cx, cy] = [0.2086, 0.2715];
paint(insetCanvas, cx - halfX, cx + halfX, cy - halfY, cy + halfY);
add(insetBox, 'target', { left: '50%', top: '50%' });
add(insetBox, 'measured', {
    left: 50 + 0.005 / halfX * 50 + '%',
    top: 50 - 0.0033 / halfY * 50 + '%',
    backgroundColor: '#0086a5'
});
```
